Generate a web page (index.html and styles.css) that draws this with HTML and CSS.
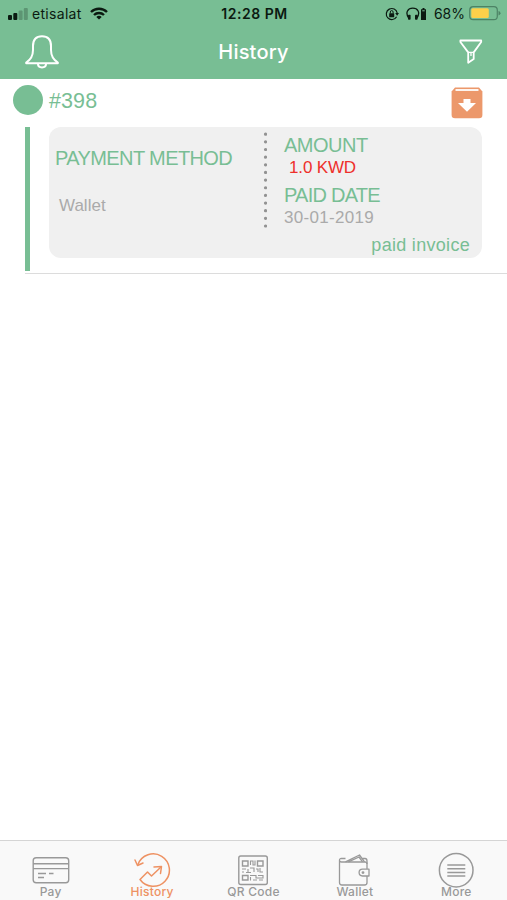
FILE: index.html
```html
<!DOCTYPE html>
<html lang="en">
<head>
    <meta charset="UTF-8">
    <meta name="viewport" content="width=device-width, initial-scale=1.0">
    <title>History</title>
    <link rel="stylesheet" href="styles.css">
</head>
<body>
    <div class="app">
        <header class="header">
            <div class="status-bar">
                <div class="status-left">
                    <svg class="signal" width="20" height="12" viewBox="0 0 20 12">
                        <rect x="0" y="7" width="4" height="5" rx="1" />
                        <rect x="5.3" y="5" width="4" height="7" rx="1" />
                        <rect x="10.6" y="2.5" width="4" height="9.5" rx="1" opacity=".25" />
                        <rect x="15.8" y="0" width="4" height="12" rx="1" opacity=".25" />
                    </svg>
                    <span class="carrier">etisalat</span>
                    <svg class="wifi" width="18" height="13" viewBox="0 0 18 13" fill="none" stroke="#0b1a11" stroke-width="2.4">
                        <path d="M1 5 A11.5 11.5 0 0 1 17 5" />
                        <path d="M4 8 A7.2 7.2 0 0 1 14 8" />
                        <path d="M6.3 9.9 A4 4 0 0 1 11.7 9.9 L9 12.6 Z" fill="#0b1a11" stroke="none" />
                    </svg>
                </div>
                <span class="time">12:28 PM</span>
                <div class="status-right">
                    <svg class="lock" width="14" height="14" viewBox="0 0 14 14" fill="none" stroke="#0b1a11">
                        <path d="M11.6 9.7 A5.5 5.5 0 1 1 12.2 6" stroke-width="1.2" />
                        <path d="M10.2 6 H14 L12.1 8.8 Z" fill="#0b1a11" stroke="none" />
                        <rect x="4.2" y="6.2" width="5" height="4" rx=".5" fill="#0b1a11" stroke="none" />
                        <path d="M5.3 6.5 V5 A1.4 1.4 0 0 1 8.1 5 V6.5" />
                    </svg>
                    <svg class="headphones" width="21" height="14" viewBox="0 0 21 14" fill="none" stroke="#0b1a11">
                        <path d="M2.7 11 C-1.2 5.5 2 1.2 6.8 1.2 C11.6 1.2 14.8 5.5 10.9 11" stroke-width="1.3" />
                        <rect x="2" y="7.8" width="2.6" height="5" rx=".8" fill="#0b1a11" stroke="none" />
                        <rect x="9" y="7.8" width="2.6" height="5" rx=".8" fill="#0b1a11" stroke="none" />
                        <path d="M16.5 1 H18.5 V2.2 H20 V13 H15 V2.2 H16.5 Z" fill="#0b1a11" stroke="none" />
                        <path d="M16.3 3.8 H18.7" stroke="#78be94" />
                    </svg>
                    <span class="percent">68%</span>
                    <svg class="battery" width="32" height="15" viewBox="0 0 32 15">
                        <rect x=".7" y=".7" width="27.6" height="13" rx="3.5" fill="none" stroke="#4d8365" stroke-width="1.2" />
                        <rect x="2.3" y="2.3" width="17.5" height="9.8" rx="1.5" fill="#fdd04a" />
                        <path d="M29.5 5 Q31.5 5.6 31.5 7.2 T29.5 9.5 Z" fill="#4d8365" />
                    </svg>
                </div>
            </div>
            <div class="nav-bar">
                <svg class="bell" width="36" height="36" viewBox="0 0 36 36" fill="none" stroke="#fff" stroke-width="2" stroke-linejoin="round">
                    <path d="M2.2 28.5 C7 25.5 9 22 9 16 V12 C9 5.5 12.5 2.2 18 2.2 S27 5.5 27 12 V16 C27 22 29 25.5 33.8 28.5 V29.2 H2.2 Z" />
                    <path d="M14 30 C14 34.5 22 34.5 22 30" />
                </svg>
                <h1>History</h1>
                <svg class="filter" width="24" height="26" viewBox="0 0 24 26" fill="none" stroke="#fff" stroke-width="1.8" stroke-linejoin="round">
                    <path d="M1.4 1.5 H22.2 V3 L14.7 13.4 V20 L9.2 23.8 V13.4 L1.4 3 Z" />
                    <path d="M9.2 13.4 H14.7 M12 13.4 V17" stroke-width="1.3" />
                </svg>
            </div>
        </header>

        <main class="history">
            <div class="entry-head">
                <span class="dot"></span>
                <span class="number">#398</span>
                <svg class="download" width="32" height="32" viewBox="0 0 32 32">
                    <path d="M4 .5 H28 L31.4 4.5 V28 Q31.4 31.3 28 31.3 H4 Q.6 31.3 .6 28 V4.5 Z" fill="#ec986b" />
                    <path d="M4.5 3 H27.5" stroke="#fff" stroke-width="1.8" />
                    <path d="M12.5 12 H19.5 V16 H25 L16 24.8 L7 16 H12.5 Z" fill="#fff" />
                </svg>
            </div>
            <div class="entry-body">
                <div class="card">
                    <div class="method">
                        <div class="label method-label">PAYMENT METHOD</div>
                        <div class="value">Wallet</div>
                    </div>
                    <svg class="divider" width="4" height="96" viewBox="0 0 4 96">
                        <path d="M2.5 2.2 V95" stroke="#929292" stroke-width="3.2" stroke-linecap="round" stroke-dasharray="0 7.65" />
                    </svg>
                    <div class="details">
                        <div class="label amount-label">AMOUNT</div>
                        <div class="amount">1.0 KWD</div>
                        <div class="label date-label">PAID DATE</div>
                        <div class="date">30-01-2019</div>
                        <div class="invoice">paid invoice</div>
                    </div>
                </div>
            </div>
        </main>

        <nav class="tabs">
            <div class="tab">
                <svg width="40" height="36" viewBox="0 0 40 36" fill="none" stroke="#999" stroke-width="1.4">
                    <rect x="2.2" y="5.8" width="35.5" height="25" rx="3" />
                    <path d="M2 11.8 H37.5 M2 16.6 H37.5 M7 21.5 H15 M18 21.5 H22.5 M7 25.5 H13" />
                </svg>
                <span>Pay</span>
            </div>
            <div class="tab active">
                <svg width="40" height="36" viewBox="-1.5 0 40 36" fill="none" stroke="#ee9263" stroke-width="1.5" stroke-linejoin="round" stroke-linecap="round">
                    <path d="M4.5 12.5 A16.2 16.2 0 1 1 6.5 27.5 L14 20 L18 24 L27.5 15" />
                    <path d="M1.5 8 L4 13.5 L9.5 11 M20.5 15 L28 14.5 L27 21.5" />
                </svg>
                <span>History</span>
            </div>
            <div class="tab">
                <svg width="40" height="36" viewBox="0 0 40 36" fill="none" stroke="#999" stroke-width="1.4">
                    <rect x="5.8" y="4" width="28.5" height="28.5" rx="2" />
                    <path d="M9.5 9 H15 V14 H9.5 Z M24.5 9 H30 V14 H24.5 Z M9.5 23.5 H15 V28 H9.5 Z" />
                    <path d="M17.5 8.5 V13 M17.5 9 H20 V13 H22 V8.5 M9 17 H13 M15 17 V20 M17 16 H21 V20 M23 17 H25 V20 M27 16 V20 H30 M9 20 H11 M13 20.5 H18 M17 23.5 H23 V26 H30 V23.5 H25 M17.5 25 V28.5 M20 28 H24 M26 28 H30" stroke-width="1.1" />
                </svg>
                <span>QR Code</span>
            </div>
            <div class="tab">
                <svg width="40" height="36" viewBox="-1 0 40 36" fill="none" stroke="#999" stroke-width="1.3" stroke-linejoin="round">
                    <path d="M31 17 V12 Q31 10 29 10 H5.5 Q3.5 10 3.5 8.2 T5.5 6.5 H9.5 M3.5 8 V30.5 Q3.5 33 6 33 H28.5 Q31 33 31 30.5 V24" />
                    <path d="M9.5 9.8 L23.5 3 L28.5 9.8 M12.5 9.8 L23 5 L26.5 9.8 M26 6.5 H29 Q31 6.5 31 9 V12" />
                    <path d="M33 17.2 H26.5 A3.4 3.4 0 0 0 26.5 24 H33 Z" />
                    <circle cx="27" cy="20.6" r=".8" />
                </svg>
                <span>Wallet</span>
            </div>
            <div class="tab">
                <svg width="40" height="36" viewBox="0 0 40 36" fill="none" stroke="#999" stroke-width="1.5">
                    <circle cx="20.2" cy="18.2" r="16.8" />
                    <path d="M11.3 13 H29.3 M11.3 16.7 H29.3 M11.3 20.4 H29.3 M11.3 24.1 H29.3" />
                </svg>
                <span>More</span>
            </div>
        </nav>
    </div>
</body>
</html>
```
FILE: styles.css
```css
body {
    margin: 0;
    font-family: "Liberation Sans", Arial, sans-serif;
    background: #fff;
}
.app {
    display: flex;
    flex-direction: column;
    height: 900px;
    overflow: hidden;
}
.header {
    height: 79px;
    background: #78be94;
}
.status-bar {
    display: grid;
    grid-template-columns: 1fr auto 1fr;
    align-items: center;
    height: 27px;
    padding: 0 6px 0 8px;
    font-family: Inter, sans-serif;
    font-size: 14px;
    color: #0b1a11;
}
.status-left, .status-right {
    display: flex;
    align-items: center;
}
.status-right {
    justify-content: flex-end;
}
.signal {
    fill: #0b1a11;
}
.carrier {
    margin: 0 8px 0 4px;
    letter-spacing: 0.3px;
}
.time {
    font-weight: 600;
    letter-spacing: 0.5px;
}
.lock {
    margin-right: 7px;
}
.headphones {
    margin-right: 7px;
}
.percent {
    margin-right: 4px;
}
.nav-bar {
    display: grid;
    grid-template-columns: 1fr auto 1fr;
    align-items: center;
    height: 50px;
    padding: 0 24px;
}
.nav-bar h1 {
    margin: 0;
    font-family: Inter, sans-serif;
    font-size: 20px;
    font-weight: 500;
    letter-spacing: 0.2px;
    color: #fff;
}
.filter {
    justify-self: end;
}
.history {
    flex: 1;
}
.entry-head {
    display: flex;
    align-items: center;
    height: 48px;
    padding: 0 24px 0 13px;
}
.dot {
    width: 30px;
    height: 30px;
    margin-top: -6px;
    border-radius: 50%;
    background: #78be94;
}
.number {
    margin: -4px auto 0 6px;
    font-size: 21.5px;
    letter-spacing: 0.1px;
    color: #78be94;
}
.download {
    margin-top: -1px;
}
.entry-body {
    display: flex;
    height: 144px;
    margin-left: 25px;
    padding: 0 25px 2px 0;
    border-bottom: 1px solid #dcdcdc;
}
.entry-body::before {
    content: '';
    width: 5px;
    margin-right: 19px;
    background: #78be94;
}
.card {
    display: flex;
    flex: 1;
    height: 131px;
    border-radius: 12px;
    background: #f0f0f0;
}
.label {
    font-size: 20px;
    line-height: 22px;
    color: #78be94;
    white-space: nowrap;
}
.method {
    width: 208px;
    padding: 20px 0 0 6px;
}
.method-label {
    letter-spacing: -0.6px;
}
.value {
    margin: 27px 0 0 4px;
    font-size: 17px;
    line-height: 20px;
    color: #aaa;
}
.divider {
    margin-top: 5px;
}
.details {
    flex: 1;
    display: flex;
    flex-direction: column;
    padding: 7px 12px 0 17px;
}
.amount-label {
    letter-spacing: -0.5px;
}
.date-label {
    margin-top: 5px;
    letter-spacing: -0.75px;
}
.amount {
    margin: 1px 0 0 5px;
    font-size: 17px;
    line-height: 22px;
    letter-spacing: -0.15px;
    color: #ee2f2b;
}
.date {
    margin-top: 1px;
    font-size: 17px;
    line-height: 22px;
    letter-spacing: 0.3px;
    color: #aaa;
}
.invoice {
    align-self: flex-end;
    margin-top: 5px;
    font-size: 18px;
    line-height: 22px;
    letter-spacing: 0.3px;
    color: #78be94;
}
.tabs {
    display: grid;
    grid-template-columns: repeat(5, 1fr);
    height: 59px;
    border-top: 1px solid #d5d5d5;
    background: #f9f9f9;
}
.tab {
    display: flex;
    flex-direction: column;
    align-items: center;
    padding-top: 11px;
    font-family: Inter, sans-serif;
    font-size: 12px;
    font-weight: 500;
    line-height: 12px;
    letter-spacing: 0.25px;
    color: #999;
}
.tab svg {
    flex: none;
    margin-bottom: -2px;
}
.active {
    color: #ee9263;
}
```
